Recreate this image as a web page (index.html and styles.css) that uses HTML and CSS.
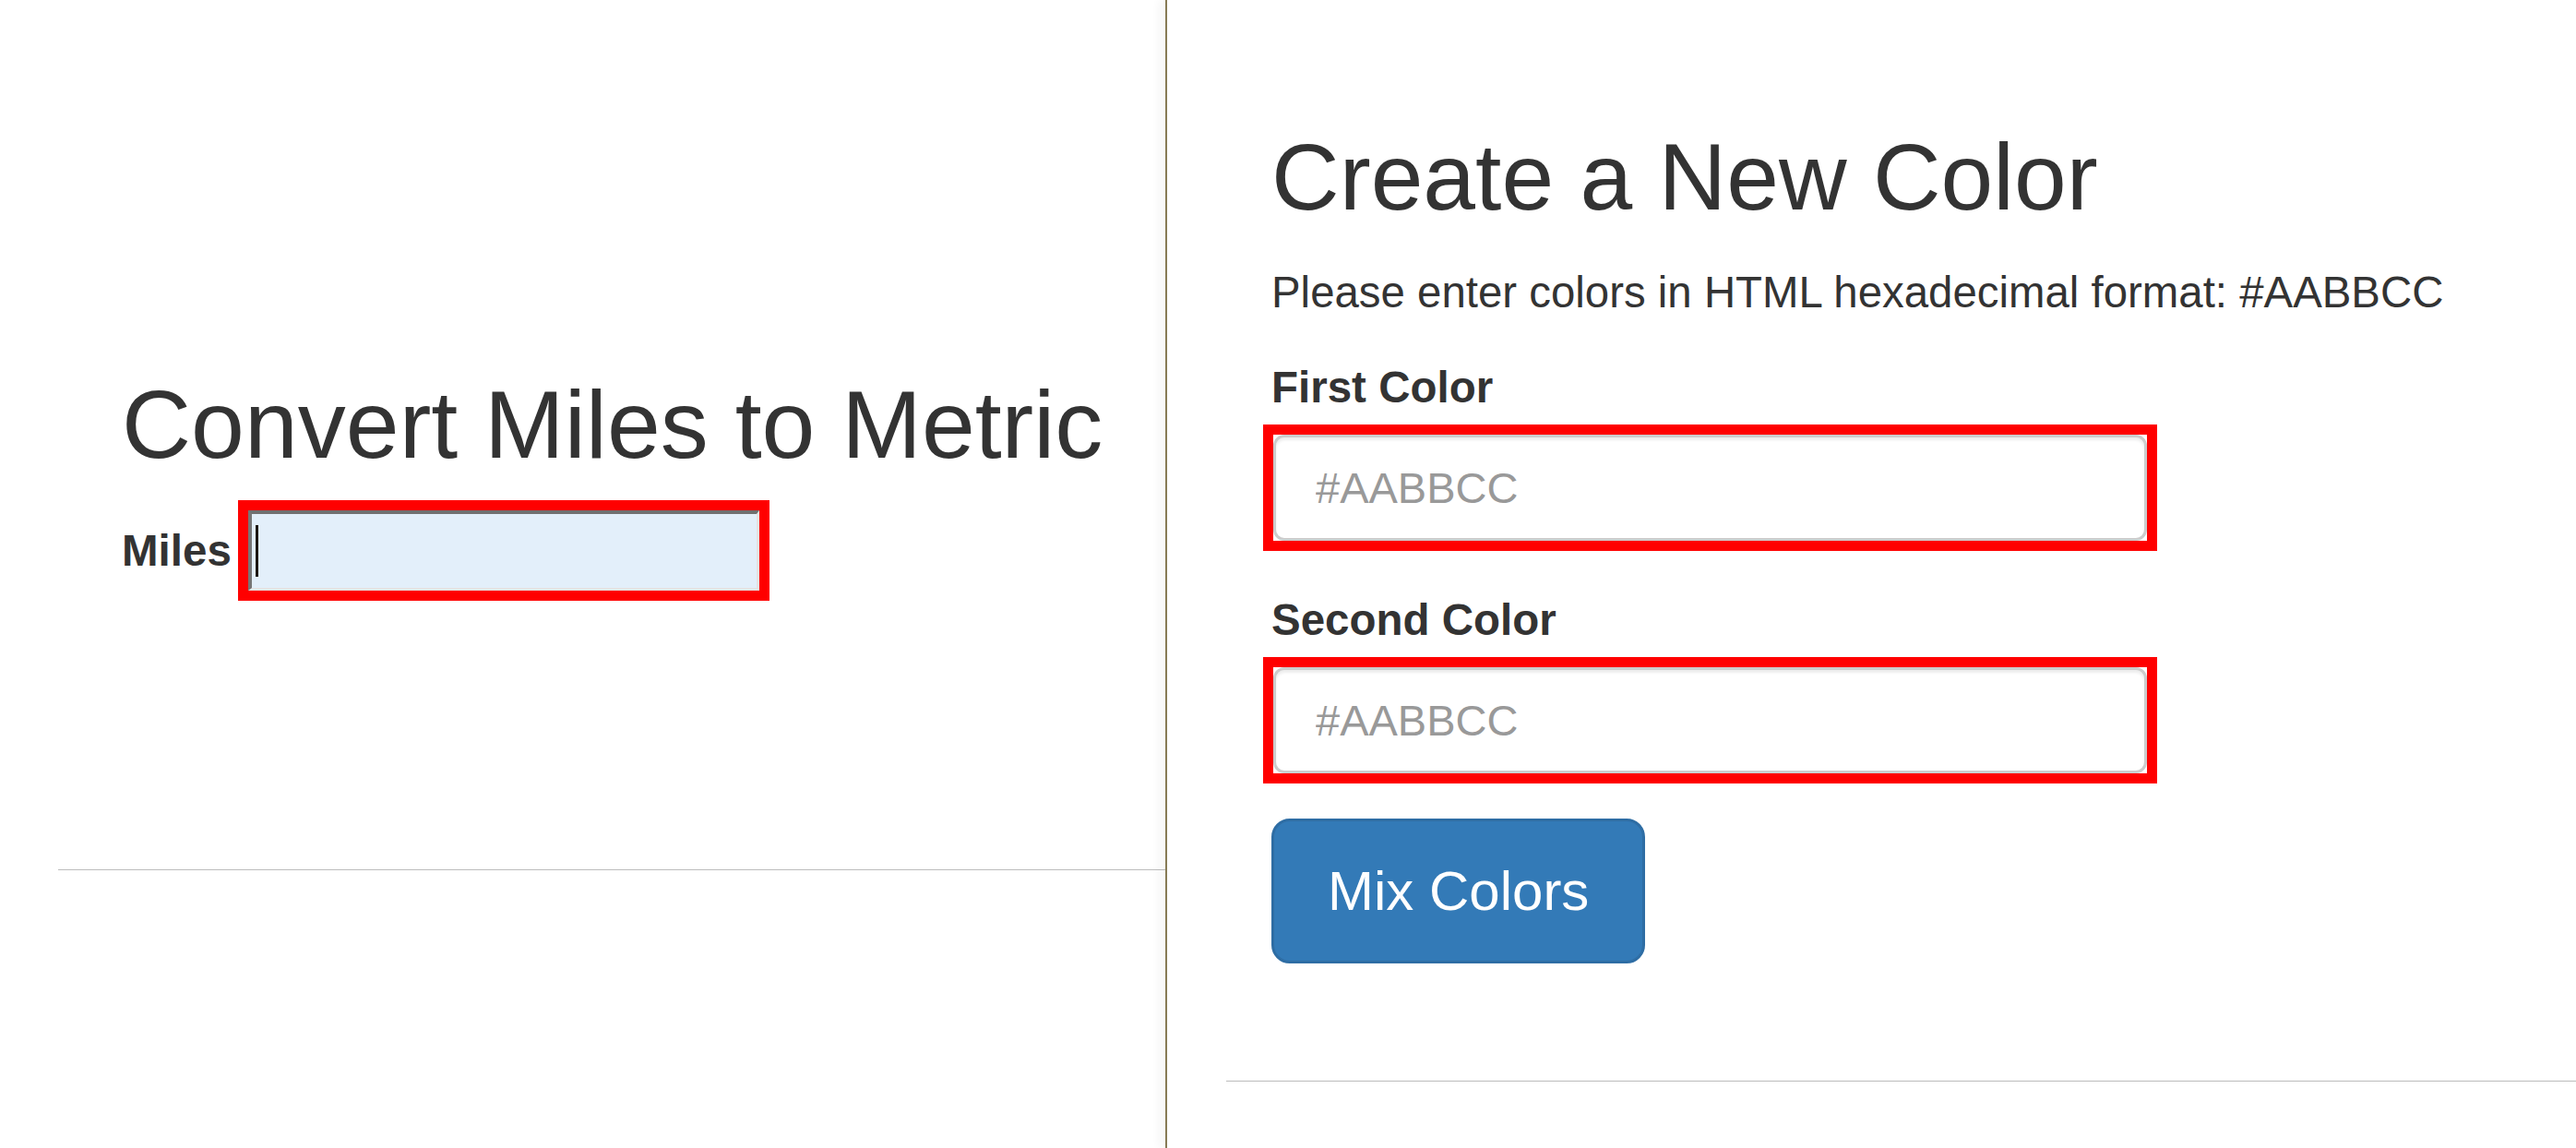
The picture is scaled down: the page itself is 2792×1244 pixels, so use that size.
FILE: index.html
```html
<!DOCTYPE html>
<html lang="en">
<head>
<meta charset="utf-8">
<title>Converters</title>
<link rel="stylesheet" href="styles.css">
</head>
<body>
<div class="split">
  <section class="pane pane-left">
    <div class="miles-block">
      <h1 class="title">Convert Miles to Metric</h1>
      <form class="miles-row">
        <label class="lbl lbl-inline" for="miles">Miles</label>
        <div class="hl">
          <div class="legacy-input" id="miles" role="textbox"><span class="caret"></span></div>
        </div>
      </form>
    </div>
    <hr class="rule rule-left">
  </section>
  <div class="divider"></div>
  <section class="pane pane-right">
    <form class="color-form">
      <h1 class="title title-right">Create a New Color</h1>
      <p class="lead">Please enter colors in HTML hexadecimal format: #AABBCC</p>
      <div class="group group-first">
        <label class="lbl" for="c1">First Color</label>
        <div class="hl hl-block">
          <input class="field" id="c1" type="text" placeholder="#AABBCC">
        </div>
      </div>
      <div class="group group-second">
        <label class="lbl" for="c2">Second Color</label>
        <div class="hl hl-block">
          <input class="field" id="c2" type="text" placeholder="#AABBCC">
        </div>
      </div>
      <button class="btn-mix" type="button">Mix Colors</button>
    </form>
    <hr class="rule rule-right">
  </section>
</div>
</body>
</html>
```
FILE: styles.css
```css
* {
  box-sizing: border-box;
}

html,
body {
  margin: 0;
  padding: 0;
  height: 1244px;
  overflow: hidden;
  background: #ffffff;
}

body {
  font-family: "Liberation Sans", Arial, sans-serif;
  color: #333333;
}

.split {
  display: flex;
  height: 1244px;
}

.pane {
  display: flex;
  flex-direction: column;
}

.pane-left {
  flex: 0 0 1263px;
  padding-top: 403px;
}

.pane-right {
  flex: 1 1 auto;
  padding-top: 135px;
}

.divider {
  flex: 0 0 2px;
  background: #877b55;
  box-shadow: -5px 0 9px rgba(0, 0, 0, 0.14);
  position: relative;
  z-index: 1;
}

.title {
  margin: 0;
  font-size: 104px;
  line-height: 115px;
  font-weight: 400;
  color: #333333;
  white-space: nowrap;
}

.title-right {
  font-size: 102px;
}

.miles-block {
  padding-left: 132px;
}

.miles-row {
  display: flex;
  align-items: center;
  gap: 7px;
  margin: 24px 0 0;
}

.lbl {
  display: block;
  font-size: 47.5px;
  line-height: 67px;
  font-weight: 700;
  color: #333333;
}

.lbl-inline {
  display: inline-block;
}

.hl {
  display: inline-block;
  border: 11px solid #ff0000;
  background: #ffffff;
}

.hl-block {
  display: block;
  width: fit-content;
  margin-left: -9px;
}

.legacy-input {
  width: 554px;
  height: 87px;
  background: #e3effa;
  border-style: solid;
  border-width: 4px 3px 3px 4px;
  border-top-color: #707070;
  border-left-color: #767676;
  border-bottom-color: #e4e4e4;
  border-right-color: #e4e4e4;
  display: flex;
  align-items: center;
  padding-left: 4px;
}

.caret {
  display: block;
  width: 3px;
  height: 56px;
  background: #1c1712;
}

.rule {
  border: 0;
  border-top: 1px solid #bcbcbc;
  height: 0;
  margin-bottom: 0;
  margin-right: 0;
}

.rule-left {
  margin-top: 291px;
  margin-left: 63px;
}

.rule-right {
  margin-top: 127px;
  margin-left: 64px;
}

.color-form {
  margin: 0;
  padding-left: 113px;
}

.lead {
  margin: 33px 0 0;
  font-size: 47.4px;
  line-height: 67px;
  white-space: nowrap;
}

.group-first {
  margin-top: 36px;
}

.group-second {
  margin-top: 41px;
}

.group .lbl {
  margin-bottom: 7px;
}

.field {
  display: block;
  width: 947px;
  height: 115px;
  margin: 0;
  padding: 0 43px;
  font-family: "Liberation Sans", Arial, sans-serif;
  font-size: 47px;
  color: #555555;
  background: #ffffff;
  border: 3px solid #cccccc;
  border-radius: 12px;
  box-shadow: inset 0 3px 3px rgba(0, 0, 0, 0.075);
  outline: none;
}

.field::placeholder {
  color: #999999;
  opacity: 1;
}

.btn-mix {
  display: block;
  margin-top: 38px;
  height: 157px;
  padding: 0 58px;
  font-family: "Liberation Sans", Arial, sans-serif;
  font-size: 60px;
  line-height: 70px;
  color: #ffffff;
  background: #337ab7;
  border: 3px solid #2e6da4;
  border-radius: 20px;
  cursor: pointer;
}
```
